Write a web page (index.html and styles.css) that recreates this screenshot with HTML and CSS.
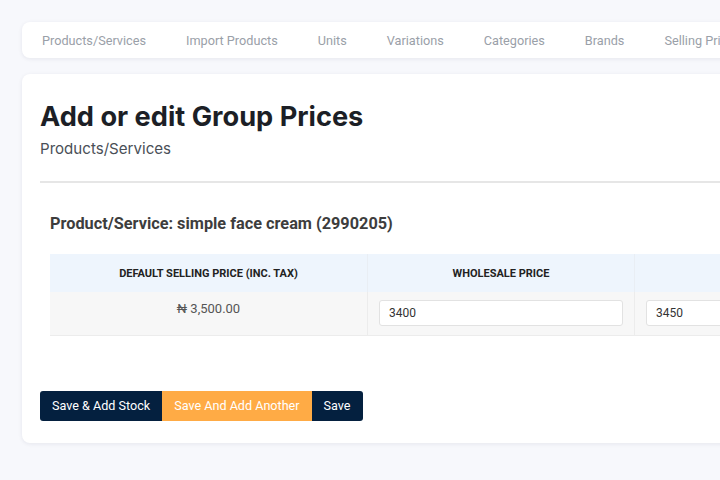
FILE: index.html
```html
<!DOCTYPE html>
<html>
<head>
<meta charset="utf-8">
<link rel="stylesheet" href="styles.css">
</head>
<body>
<div class="page">
  <nav class="tabs card">
    <a>Products/Services</a>
    <a>Import Products</a>
    <a>Units</a>
    <a>Variations</a>
    <a>Categories</a>
    <a>Brands</a>
    <a>Selling Price Group</a>
  </nav>
  <main class="main card">
    <h1 class="title">Add or edit Group Prices</h1>
    <div class="subtitle">Products/Services</div>
    <hr class="divider">
    <h2 class="product">Product/Service: simple face cream (2990205)</h2>
    <table class="prices">
      <thead>
        <tr>
          <th class="c1">Default Selling Price (Inc. Tax)</th>
          <th class="c2">Wholesale Price</th>
          <th class="c3">Retail Price</th>
        </tr>
      </thead>
      <tbody>
        <tr>
          <td class="price">₦ 3,500.00</td>
          <td><input class="field" type="text" value="3400"></td>
          <td><input class="field" type="text" value="3450"></td>
        </tr>
      </tbody>
    </table>
    <div class="actions">
      <button class="btn dark first">Save &amp; Add Stock</button>
      <button class="btn orange">Save And Add Another</button>
      <button class="btn dark last">Save</button>
    </div>
  </main>
</div>
</body>
</html>
```
FILE: styles.css
```css
html, body {
  margin: 0;
  padding: 0;
  background: #f7f8fc;
  overflow: hidden;
  width: 720px;
  height: 480px;
}
.page {
  width: 900px;
  padding: 22px 0 0 22px;
  display: flex;
  flex-direction: column;
  gap: 16px;
  font-family: Roboto, "Liberation Sans", sans-serif;
}
.card {
  background: #fff;
  border-radius: 8px;
  box-shadow: 0 1px 4px rgba(20, 30, 60, 0.08);
}
.tabs {
  height: 36px;
  display: flex;
  align-items: center;
  gap: 40px;
  padding-left: 20px;
  white-space: nowrap;
  overflow: hidden;
}
.tabs a {
  font-size: 12.7px;
  color: #9aa0a8;
}
.main {
  padding: 26px 0 22px 18px;
}
.title {
  margin: 0;
  font-family: Inter, Roboto, sans-serif;
  font-weight: 700;
  font-size: 27.2px;
  line-height: 34px;
  color: #1c1f26;
}
.subtitle {
  margin-top: 4px;
  font-family: Inter, Roboto, sans-serif;
  font-size: 15.1px;
  line-height: 22px;
  color: #4a4f57;
}
.divider {
  margin: 21px 0 0 0;
  border: 0;
  border-top: 2px solid #e6e6e6;
}
.product {
  margin: 30px 0 0 10px;
  font-size: 16.3px;
  font-weight: 700;
  line-height: 22px;
  color: #3d3d3d;
}
.prices {
  margin: 19px 0 0 10px;
  border-collapse: collapse;
  table-layout: fixed;
  width: 850px;
}
.prices th {
  background: #eef5fd;
  height: 38px;
  font-size: 11px;
  font-weight: 700;
  text-transform: uppercase;
  color: #222;
  padding: 0;
}
.prices .c1 { width: 317px; }
.prices .c2 { width: 266px; }
.prices .c3 { width: 267px; }
.prices th + th { border-left: 1px solid #e9eef4; }
.prices td {
  background: #f7f7f7;
  height: 43px;
  padding: 0 11px;
  border-bottom: 1px solid #ececec;
  box-sizing: border-box;
}
.prices td + td { border-left: 1px solid #ececec; }
.prices td.price {
  text-align: center;
  vertical-align: top;
  padding-top: 9px;
  font-size: 13px;
  color: #555;
}
.field {
  display: block;
  width: 100%;
  height: 26px;
  box-sizing: border-box;
  border: 1px solid #e2e2e2;
  border-radius: 3px;
  background: #fff;
  padding: 0 9px;
  font-family: Roboto, "Liberation Sans", sans-serif;
  font-size: 12px;
  color: #333;
}
.actions {
  margin-top: 55px;
  display: flex;
}
.btn {
  height: 30px;
  border: 0;
  padding: 0 12px;
  font-family: Roboto, "Liberation Sans", sans-serif;
  font-size: 12.6px;
  color: #fff;
}
.btn.dark { background: #04203f; }
.btn.orange { background: #ffab45; }
.btn.first { border-radius: 3px 0 0 3px; }
.btn.last { border-radius: 0 3px 3px 0; }
```
